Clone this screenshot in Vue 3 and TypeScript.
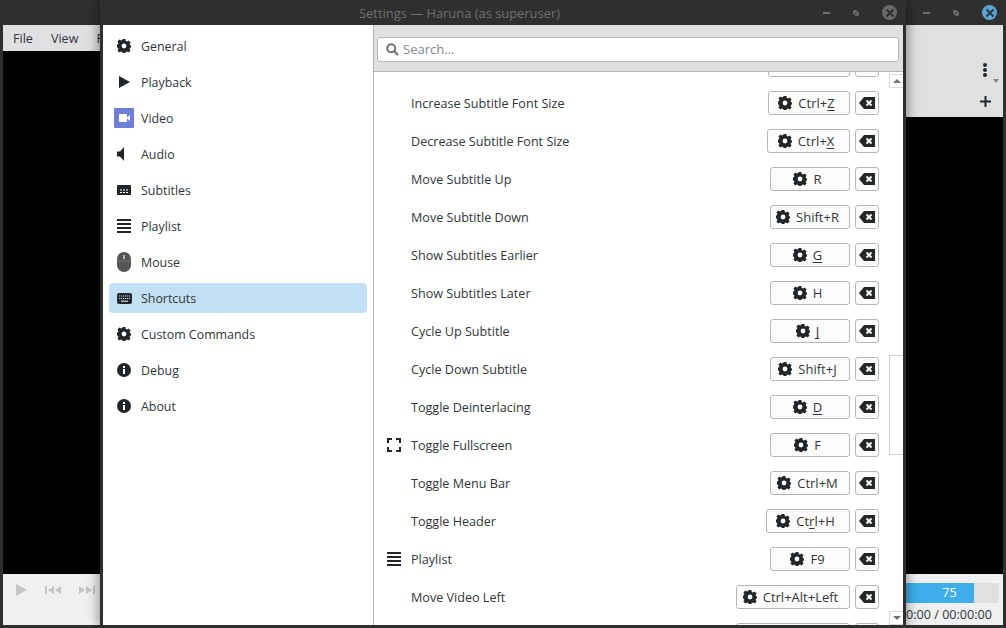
<template>
  <div class="desktop">
    <!-- main Haruna window, behind the dialog -->
    <div class="window main-window">
      <div class="titlebar">
        <div class="win-buttons">
          <span class="win-min"></span>
          <svg class="win-max" width="10" height="10" viewBox="0 0 10 10"><path d="M1 1H6L9 4V9H4L1 6Z" fill="#6f6f6f" /><path d="M3 7 7 3" stroke="#2f2f2f" stroke-width="1.4" /></svg>
          <span class="win-close active">
            <svg width="10" height="10" viewBox="0 0 10 10"><path d="M1.5 1.5 8.5 8.5M8.5 1.5 1.5 8.5" stroke="#2f3640" stroke-width="2" /></svg>
          </span>
        </div>
      </div>
      <div class="main-middle">
        <div class="main-left">
          <nav class="menubar">
            <span>File</span>
            <span>View</span>
            <span>Playback</span>
          </nav>
          <div class="video"></div>
        </div>
        <div class="main-right">
          <div class="main-tools">
            <div class="dots"><i></i><i></i><i></i></div>
            <span class="dots-caret"></span>
            <svg class="plus" width="11" height="11" viewBox="0 0 11 11"><path d="M5.5 0V11M0 5.5H11" stroke="#232629" stroke-width="2" /></svg>
          </div>
          <div class="video"></div>
        </div>
      </div>
      <div class="footer">
        <div class="transport">
          <svg width="11" height="12" viewBox="0 0 11 12"><path d="M0 0 11 6 0 12Z" fill="#c4c5c6" /></svg>
          <svg width="16" height="8" viewBox="0 0 16 8"><path d="M0 0H2V8H0ZM9 0V8L3 4ZM16 0V8L10 4Z" fill="#c4c5c6" /></svg>
          <svg width="16" height="8" viewBox="0 0 16 8"><path d="M16 0H14V8H16ZM7 0V8L13 4ZM0 0V8L6 4Z" fill="#c4c5c6" /></svg>
        </div>
        <div class="levels">
          <div class="volume"><div class="volume-fill" :style="{ width: volume + '%' }"></div><span>{{ volume }}</span></div>
          <div class="clock">00:00 / 00:00:00</div>
        </div>
      </div>
    </div>

    <!-- settings dialog -->
    <div class="window settings-window">
      <div class="titlebar">
        <span class="title">Settings — Haruna (as superuser)</span>
        <div class="win-buttons">
          <span class="win-min"></span>
          <svg class="win-max" width="10" height="10" viewBox="0 0 10 10"><path d="M1 1H6L9 4V9H4L1 6Z" fill="#6f6f6f" /><path d="M3 7 7 3" stroke="#2f2f2f" stroke-width="1.4" /></svg>
          <span class="win-close">
            <svg width="10" height="10" viewBox="0 0 10 10"><path d="M1.5 1.5 8.5 8.5M8.5 1.5 1.5 8.5" stroke="#2f2f2f" stroke-width="2" /></svg>
          </span>
        </div>
      </div>
      <div class="settings-body">
        <aside class="sidebar">
          <div v-for="item in pages" :key="item.label" class="side-item" :class="{ selected: item.label === 'Shortcuts' }">
            <span class="side-icon">
              <svg v-if="item.icon === 'gear'" width="14" height="14" viewBox="0 0 14 14"><path :d="gearPath" fill="#232629" fill-rule="evenodd" /></svg>
              <svg v-else-if="item.icon === 'play'" width="12" height="12" viewBox="0 0 12 12"><path d="M1 0 12 6 1 12Z" fill="#232629" /></svg>
              <svg v-else-if="item.icon === 'video'" width="20" height="20" viewBox="0 0 20 20"><rect width="20" height="20" rx="1" fill="#6f7fd8" /><rect x="5" y="6" width="8" height="8" rx="1" fill="#fff" /><path d="M13 9.5 16 7V13L13 10.5Z" fill="#fff" /></svg>
              <svg v-else-if="item.icon === 'audio'" width="14" height="14" viewBox="0 0 14 14"><path d="M0 4.5H3L7 0V14L3 9.5H0Z" fill="#232629" /></svg>
              <svg v-else-if="item.icon === 'subs'" width="14" height="10" viewBox="0 0 14 10"><rect width="14" height="10" rx="1" fill="#232629" /><path d="M3 5H11M3 7.5H11" stroke="#fff" stroke-dasharray="2 1" /></svg>
              <svg v-else-if="item.icon === 'list'" width="14" height="14" viewBox="0 0 14 14"><path d="M0 1H14M0 5H14M0 9H14M0 13H14" stroke="#232629" stroke-width="2" /></svg>
              <svg v-else-if="item.icon === 'mouse'" width="14" height="20" viewBox="0 0 14 20"><rect width="14" height="20" rx="7" fill="#555" /><path d="M0 9H14" stroke="#777" /><path d="M7 3V7" stroke="#ddd" stroke-width="1.4" /></svg>
              <svg v-else-if="item.icon === 'keys'" width="15" height="11" viewBox="0 0 15 11"><rect width="15" height="11" rx="2" fill="#232629" /><path d="M2 3H13M2 5.5H13" stroke="#c2e0f5" stroke-width="1.2" stroke-dasharray="1.2 .8" /><path d="M4 8.2H11" stroke="#c2e0f5" stroke-width="1.2" /></svg>
              <svg v-else width="14" height="14" viewBox="0 0 14 14"><circle cx="7" cy="7" r="7" fill="#232629" /><path d="M6 6H8V11H6ZM6 3H8V5H6Z" fill="#fff" /></svg>
            </span>
            <span>{{ item.label }}</span>
          </div>
        </aside>
        <section class="content">
          <div class="search-bar">
            <div class="search-box">
              <svg width="13" height="13" viewBox="0 0 13 13"><circle cx="5.2" cy="5.2" r="4" fill="none" stroke="#6c7278" stroke-width="2" /><path d="M8 8 12 12" stroke="#6c7278" stroke-width="2.2" /></svg>
              <span>Search…</span>
            </div>
          </div>
          <div class="list-wrap">
            <div class="list">
              <div v-for="(row, i) in rows" :key="i" class="row">
                <span class="row-icon">
                  <svg v-if="row.icon === 'full'" width="14" height="14" viewBox="0 0 14 14"><path d="M1 5V1H5M9 1H13V5M13 9V13H9M5 13H1V9" fill="none" stroke="#232629" stroke-width="2" /></svg>
                  <svg v-else-if="row.icon === 'list'" width="14" height="14" viewBox="0 0 14 14"><path d="M0 1H14M0 5H14M0 9H14M0 13H14" stroke="#232629" stroke-width="2" /></svg>
                </span>
                <span class="row-label">{{ row.label }}</span>
                <button class="key-btn" :style="{ width: row.width + 'px' }">
                  <template v-if="row.label">
                    <svg width="14" height="14" viewBox="0 0 14 14"><path :d="gearPath" fill="#232629" fill-rule="evenodd" /></svg>
                    <span>{{ row.before }}<u v-if="row.mark">{{ row.mark }}</u>{{ row.after }}</span>
                  </template>
                </button>
                <button class="clear-btn">
                  <svg v-if="row.label" width="16" height="12" viewBox="0 0 16 12"><path d="M5 0H16V12H5L0 6Z" fill="#232629" /><path d="M7.5 3.5 12.5 8.5M12.5 3.5 7.5 8.5" stroke="#fff" stroke-width="2" /></svg>
                </button>
              </div>
            </div>
            <div class="scrollbar">
              <div class="scroll-btn"><span class="arrow up"></span></div>
              <div class="scroll-track"><div class="scroll-thumb"></div></div>
              <div class="scroll-btn"><span class="arrow down"></span></div>
            </div>
          </div>
        </section>
      </div>
    </div>
  </div>
</template>

<script setup lang="ts">
interface Shortcut {
  label: string
  before: string
  mark?: string
  after?: string
  width: number
  icon?: string
}

const volume = 75

const gearPath =
  'M5.6 0H8.4L8.8 1.9 10 2.4 11.6 1.4 13.6 3.4 12.6 5 13.1 6.2 14 6.6V8.4L13.1 8.8 12.6 10 13.6 11.6 11.6 13.6 10 12.6 8.8 13.1 8.4 14H5.6L5.2 13.1 4 12.6 2.4 13.6.4 11.6 1.4 10 .9 8.8 0 8.4V5.6L.9 5.2 1.4 4 .4 2.4 2.4.4 4 1.4 5.2.9ZM7 4.6A2.4 2.4 0 1 0 7 9.4 2.4 2.4 0 1 0 7 4.6Z'

const pages = [
  { label: 'General', icon: 'gear' },
  { label: 'Playback', icon: 'play' },
  { label: 'Video', icon: 'video' },
  { label: 'Audio', icon: 'audio' },
  { label: 'Subtitles', icon: 'subs' },
  { label: 'Playlist', icon: 'list' },
  { label: 'Mouse', icon: 'mouse' },
  { label: 'Shortcuts', icon: 'keys' },
  { label: 'Custom Commands', icon: 'gear' },
  { label: 'Debug', icon: 'info' },
  { label: 'About', icon: 'info' },
]

// first and last rows are scrolled almost out of view, only their button edges show
const rows: Shortcut[] = [
  { label: '', before: '', width: 82 },
  { label: 'Increase Subtitle Font Size', before: 'Ctrl+', mark: 'Z', width: 82 },
  { label: 'Decrease Subtitle Font Size', before: 'Ctrl+', mark: 'X', width: 83 },
  { label: 'Move Subtitle Up', before: 'R', width: 80 },
  { label: 'Move Subtitle Down', before: 'Shift+R', width: 80 },
  { label: 'Show Subtitles Earlier', before: '', mark: 'G', width: 80 },
  { label: 'Show Subtitles Later', before: 'H', width: 80 },
  { label: 'Cycle Up Subtitle', before: '', mark: 'J', width: 80 },
  { label: 'Cycle Down Subtitle', before: 'Shift+J', width: 80 },
  { label: 'Toggle Deinterlacing', before: '', mark: 'D', width: 80 },
  { label: 'Toggle Fullscreen', before: 'F', width: 80, icon: 'full' },
  { label: 'Toggle Menu Bar', before: 'Ctrl+M', width: 80 },
  { label: 'Toggle Header', before: 'Ct', mark: 'r', after: 'l+H', width: 84 },
  { label: 'Playlist', before: 'F9', width: 80, icon: 'list' },
  { label: 'Move Video Left', before: 'Ctrl+Alt+Left', width: 114 },
  { label: '', before: '', width: 114 },
]
</script>

<style>
html,
body {
  margin: 0;
  overflow: hidden;
}
</style>

<style scoped>
.desktop {
  position: relative;
  width: 1006px;
  height: 628px;
  overflow: hidden;
  background: #2f2f2f;
  font-family: "Open Sans", "Noto Sans", sans-serif;
  font-size: 12.6px;
  color: #31363b;
}

.window {
  position: absolute;
  top: 0;
  height: 628px;
  display: flex;
  flex-direction: column;
  box-sizing: border-box;
  background: #2f2f2f;
}

.main-window {
  left: 0;
  width: 1006px;
  padding: 0 3px 3px;
}

.settings-window {
  left: 100px;
  width: 806px;
  padding: 0 3px 3px;
  box-shadow: 0 0 12px rgba(0, 0, 0, 0.5);
}

.titlebar {
  height: 25px;
  flex: none;
  display: flex;
  align-items: center;
  justify-content: flex-end;
  position: relative;
}

.title {
  position: absolute;
  left: 0;
  right: 87px;
  text-align: center;
  color: #6f6f6f;
  font-size: 12.9px;
}

.win-buttons {
  display: flex;
  align-items: center;
  gap: 21px;
  padding-right: 6px;
}

.win-min {
  width: 7px;
  height: 2px;
  background: #6f6f6f;
}

.win-max {
  transform: scale(0.7);
}

.win-close {
  width: 15px;
  height: 15px;
  border-radius: 50%;
  background: #6a6a6a;
  display: flex;
  align-items: center;
  justify-content: center;
}

.win-close.active {
  background: #5ba6d6;
}

.main-middle {
  flex: 1;
  min-height: 0;
  display: flex;
}

.main-left {
  flex: 1;
  display: flex;
  flex-direction: column;
}

.main-right {
  width: 98px;
  flex: none;
  display: flex;
  flex-direction: column;
}

.menubar {
  height: 26px;
  flex: none;
  box-sizing: border-box;
  background: #dfe0e2;
  display: flex;
  gap: 18px;
  padding: 5px 0 0 10px;
}

.main-tools {
  position: relative;
  height: 92px;
  flex: none;
  background: #dfe0e2;
}

.dots {
  position: absolute;
  left: 78px;
  top: 38px;
  display: flex;
  flex-direction: column;
  gap: 1px;
}

.dots i {
  display: block;
  width: 4px;
  height: 4px;
  border-radius: 50%;
  background: #232629;
}

.dots-caret {
  position: absolute;
  left: 88px;
  top: 54px;
  border: 3px solid transparent;
  border-top: 4px solid #85888b;
}

.plus {
  position: absolute;
  left: 75px;
  top: 71px;
}

.video {
  flex: 1;
  background: #000;
}

.footer {
  height: 51px;
  flex: none;
  background: #eff0f1;
  display: flex;
  justify-content: space-between;
}

.transport {
  display: flex;
  align-items: center;
  gap: 18px;
  padding: 0 0 19px 13px;
}

.levels {
  width: 98px;
  padding-top: 9px;
}

.volume {
  position: relative;
  width: 99px;
  height: 20px;
  margin-left: -5px;
  background: #dfe0e2;
  text-align: center;
  line-height: 20px;
  color: #fff;
}

.volume-fill {
  position: absolute;
  inset: 0 auto 0 0;
  background: #3daee9;
}

.volume span {
  position: relative;
}

.clock {
  margin-top: 3px;
  padding-right: 11px;
  display: flex;
  justify-content: flex-end;
  white-space: nowrap;
}

.settings-body {
  flex: 1;
  min-height: 0;
  display: flex;
  background: #fff;
}

.sidebar {
  width: 271px;
  flex: none;
  box-sizing: border-box;
  padding: 6px 6px 0;
  border-right: 1px solid #b5b6b7;
  display: flex;
  flex-direction: column;
  gap: 6px;
  font-size: 12.4px;
}

.side-item {
  height: 30px;
  flex: none;
  display: flex;
  align-items: center;
  border-radius: 4px;
  box-sizing: border-box;
}

.side-item.selected {
  background: #c2e0f5;
}

.side-icon {
  width: 30px;
  margin-right: 2px;
  flex: none;
  display: flex;
  justify-content: center;
}

.content {
  flex: 1;
  min-width: 0;
  display: flex;
  flex-direction: column;
}

.search-bar {
  height: 47px;
  flex: none;
  box-sizing: border-box;
  background: #dfe0e2;
  border-bottom: 1px solid #b5b6b7;
  padding: 12px 4px 0 3px;
}

.search-box {
  height: 25px;
  box-sizing: border-box;
  background: #fff;
  border: 1px solid #b5b6b7;
  border-radius: 3px;
  display: flex;
  align-items: center;
  gap: 4px;
  padding: 0 0 1px 8px;
  color: #858a8f;
  font-size: 13px;
}

.list-wrap {
  flex: 1;
  min-height: 0;
  display: flex;
  overflow: hidden;
}

.list {
  flex: 1;
  min-width: 0;
  margin-top: -26px;
}

.row {
  height: 38px;
  display: flex;
  align-items: center;
  padding-left: 13px;
}

.row-icon {
  width: 24px;
  flex: none;
  display: flex;
}

.row-label {
  flex: 1;
}

.key-btn,
.clear-btn {
  height: 24px;
  padding: 0;
  box-sizing: border-box;
  background: #fcfcfc;
  border: 1px solid #b5b6b7;
  border-radius: 3px;
  font: inherit;
  color: inherit;
  display: flex;
  align-items: center;
  justify-content: center;
}

.key-btn {
  gap: 6px;
  padding-right: 5px;
  font-size: 13px;
}

.key-btn u {
  text-underline-offset: 2px;
}

.clear-btn {
  width: 24px;
  margin: 0 10px 0 5px;
}

.scrollbar {
  width: 14px;
  flex: none;
  display: flex;
  flex-direction: column;
  padding-top: 2px;
}

.scroll-btn {
  height: 14px;
  flex: none;
  box-sizing: border-box;
  background: #fff;
  border: 1px solid #d8d9da;
  border-right: 0;
  display: flex;
  align-items: center;
  justify-content: center;
}

.scroll-track {
  flex: 1;
  padding-top: 267px;
}

.scroll-thumb {
  height: 100px;
  box-sizing: border-box;
  border: 1px solid #cfd0d1;
  border-right: 0;
}

.arrow {
  border: 4px solid transparent;
}

.arrow.up {
  border-top: 0;
  border-bottom: 4px solid #6f7275;
}

.arrow.down {
  border-bottom: 0;
  border-top: 4px solid #6f7275;
}
</style>
